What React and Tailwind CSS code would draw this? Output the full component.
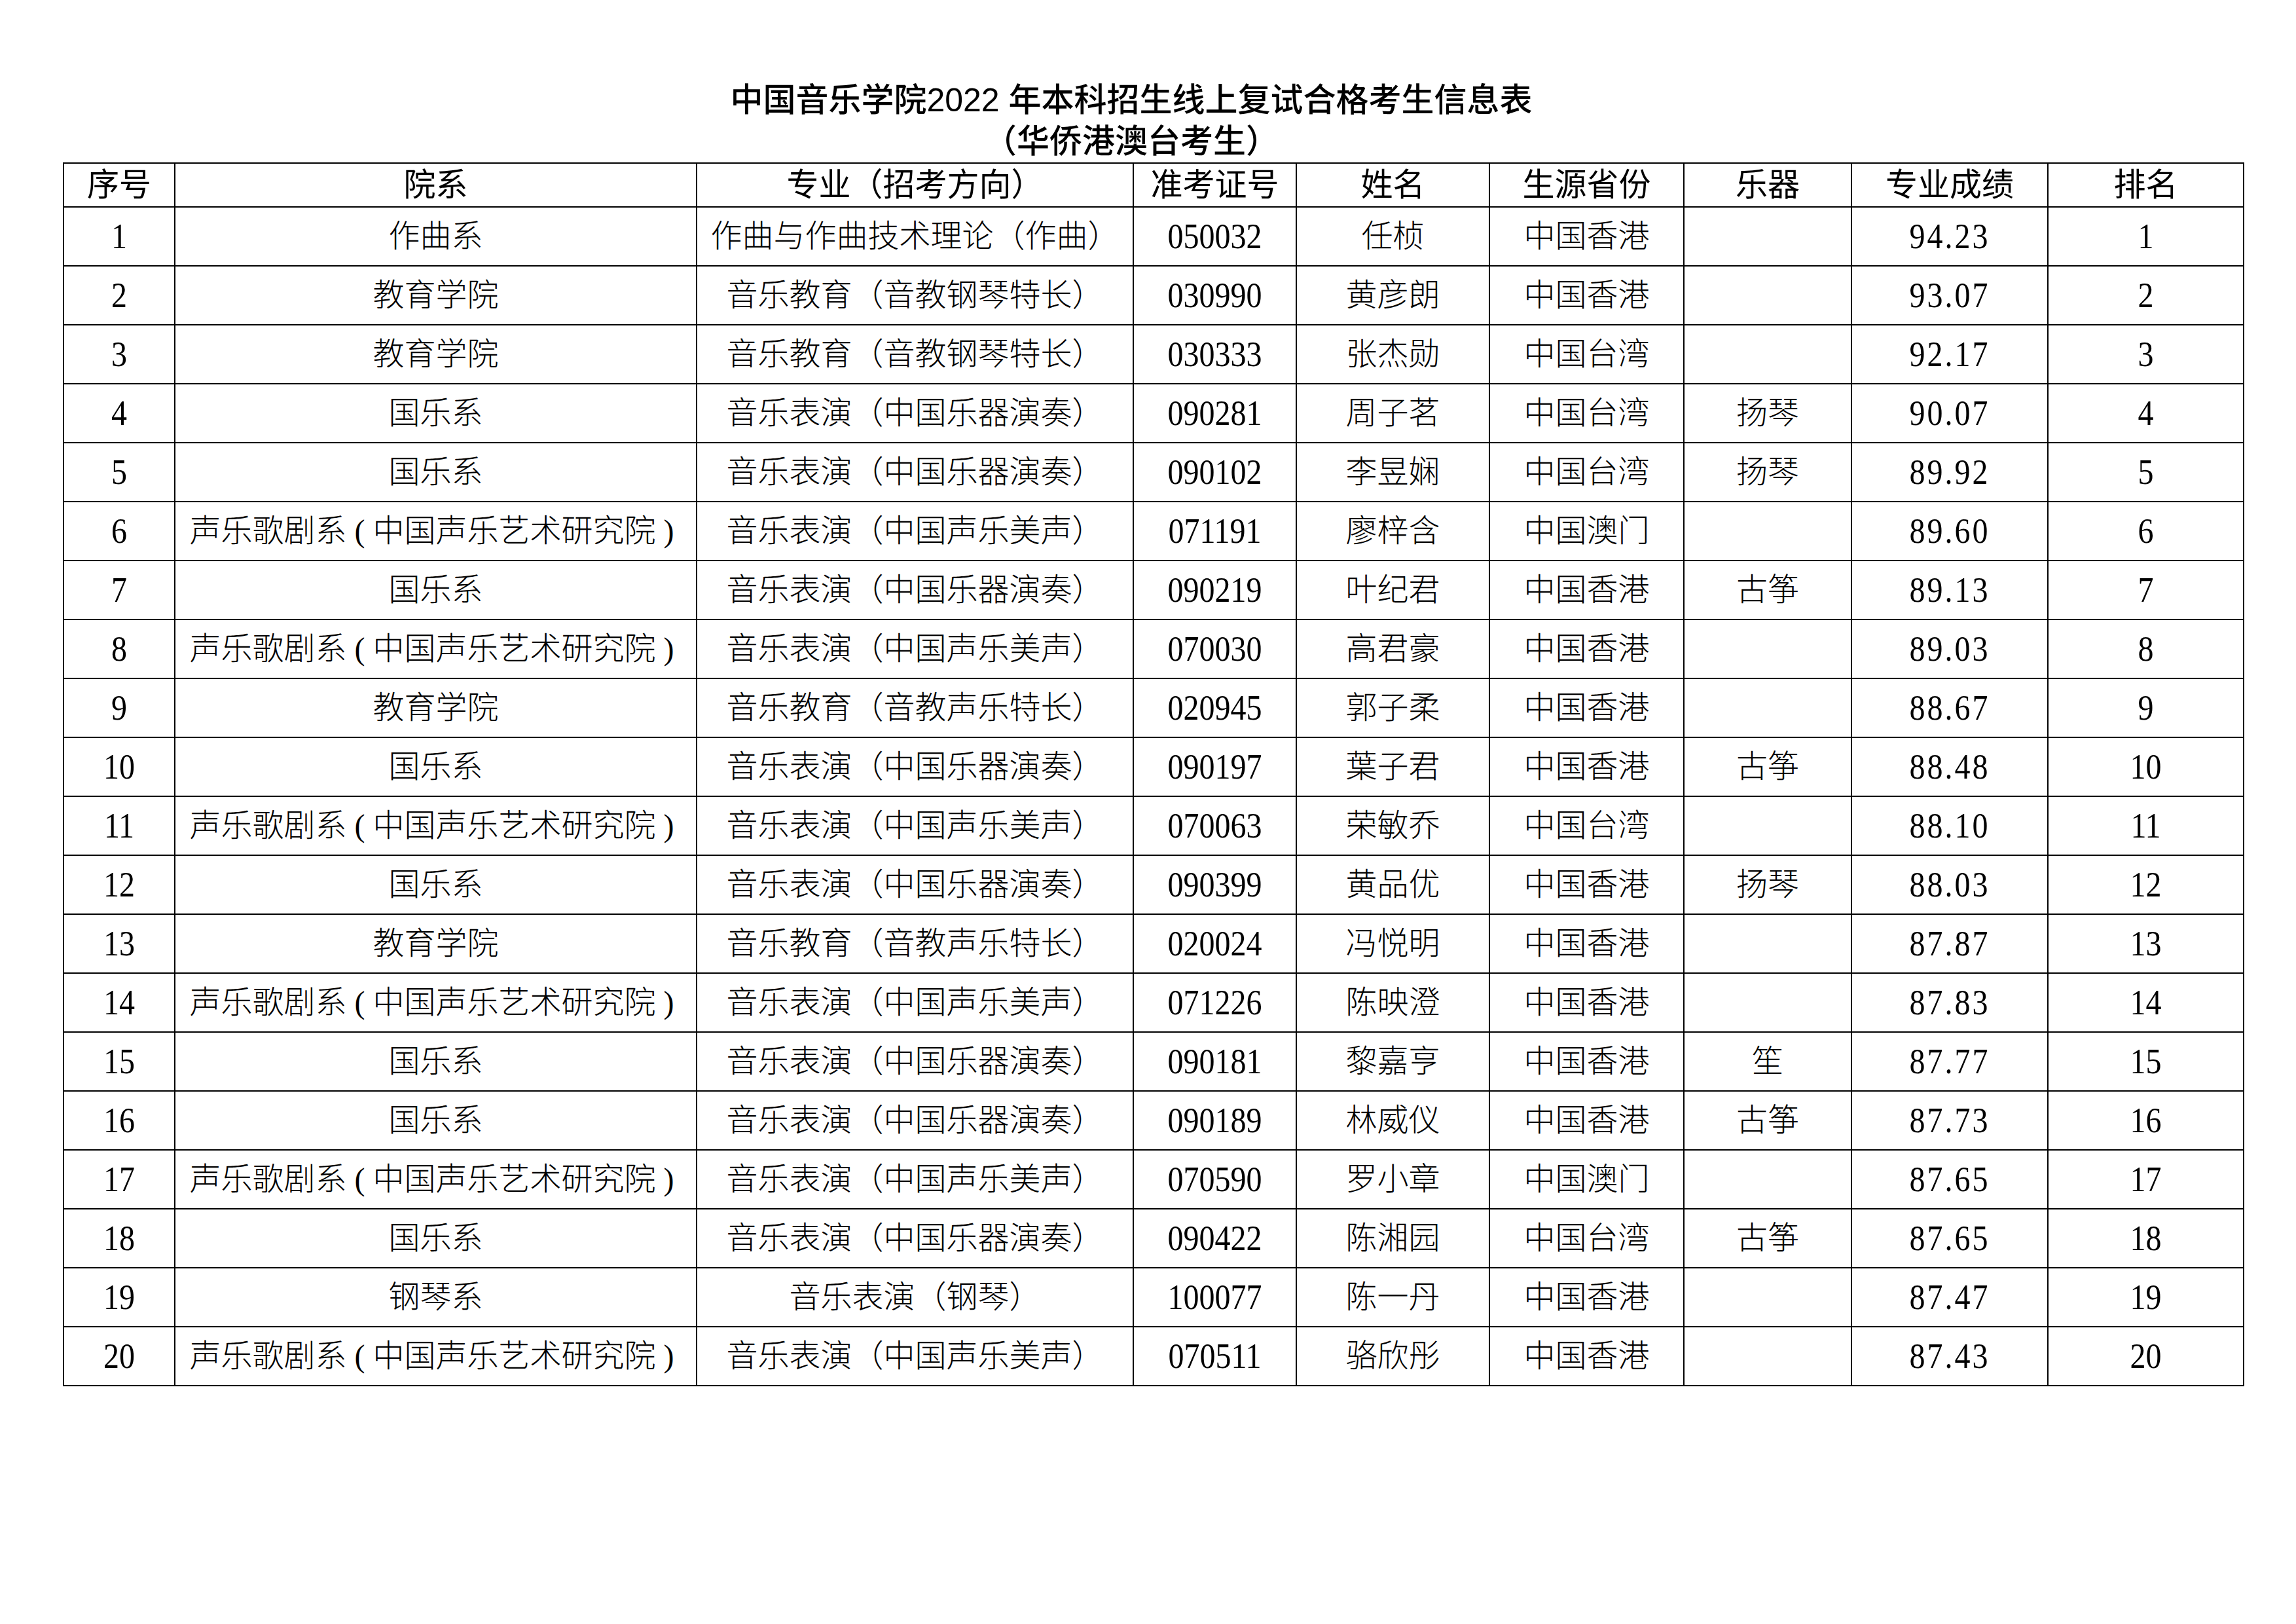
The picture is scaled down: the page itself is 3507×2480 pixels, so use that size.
const rows = [
  ["1", "作曲系", "作曲与作曲技术理论（作曲）", "050032", "任桢", "中国香港", "", "94.23", "1"],
  ["2", "教育学院", "音乐教育（音教钢琴特长）", "030990", "黄彦朗", "中国香港", "", "93.07", "2"],
  ["3", "教育学院", "音乐教育（音教钢琴特长）", "030333", "张杰勋", "中国台湾", "", "92.17", "3"],
  ["4", "国乐系", "音乐表演（中国乐器演奏）", "090281", "周子茗", "中国台湾", "扬琴", "90.07", "4"],
  ["5", "国乐系", "音乐表演（中国乐器演奏）", "090102", "李昱娴", "中国台湾", "扬琴", "89.92", "5"],
  ["6", "声乐歌剧系(中国声乐艺术研究院)", "音乐表演（中国声乐美声）", "071191", "廖梓含", "中国澳门", "", "89.60", "6"],
  ["7", "国乐系", "音乐表演（中国乐器演奏）", "090219", "叶纪君", "中国香港", "古筝", "89.13", "7"],
  ["8", "声乐歌剧系(中国声乐艺术研究院)", "音乐表演（中国声乐美声）", "070030", "高君豪", "中国香港", "", "89.03", "8"],
  ["9", "教育学院", "音乐教育（音教声乐特长）", "020945", "郭子柔", "中国香港", "", "88.67", "9"],
  ["10", "国乐系", "音乐表演（中国乐器演奏）", "090197", "葉子君", "中国香港", "古筝", "88.48", "10"],
  ["11", "声乐歌剧系(中国声乐艺术研究院)", "音乐表演（中国声乐美声）", "070063", "荣敏乔", "中国台湾", "", "88.10", "11"],
  ["12", "国乐系", "音乐表演（中国乐器演奏）", "090399", "黄品优", "中国香港", "扬琴", "88.03", "12"],
  ["13", "教育学院", "音乐教育（音教声乐特长）", "020024", "冯悦明", "中国香港", "", "87.87", "13"],
  ["14", "声乐歌剧系(中国声乐艺术研究院)", "音乐表演（中国声乐美声）", "071226", "陈映澄", "中国香港", "", "87.83", "14"],
  ["15", "国乐系", "音乐表演（中国乐器演奏）", "090181", "黎嘉亨", "中国香港", "笙", "87.77", "15"],
  ["16", "国乐系", "音乐表演（中国乐器演奏）", "090189", "林威仪", "中国香港", "古筝", "87.73", "16"],
  ["17", "声乐歌剧系(中国声乐艺术研究院)", "音乐表演（中国声乐美声）", "070590", "罗小章", "中国澳门", "", "87.65", "17"],
  ["18", "国乐系", "音乐表演（中国乐器演奏）", "090422", "陈湘园", "中国台湾", "古筝", "87.65", "18"],
  ["19", "钢琴系", "音乐表演（钢琴）", "100077", "陈一丹", "中国香港", "", "87.47", "19"],
  ["20", "声乐歌剧系(中国声乐艺术研究院)", "音乐表演（中国声乐美声）", "070511", "骆欣彤", "中国香港", "", "87.43", "20"],
];

const headers = ["序号", "院系", "专业（招考方向）", "准考证号", "姓名", "生源省份", "乐器", "专业成绩", "排名"];

function Cell({ value, index }) {
  if (index === 0 || index === 3 || index === 8) {
    return <span className="inline-block scale-y-[1.15]">{value}</span>;
  }
  if (index === 7) {
    return <span className="inline-block scale-y-[1.15] tracking-[3px]">{value}</span>;
  }
  if (value.startsWith("声乐歌剧系(")) {
    return (
      <span>
        声乐歌剧系<span className="px-[12px]">(</span>中国声乐艺术研究院<span className="px-[12px]">)</span>
      </span>
    );
  }
  return <span>{value}</span>;
}

export default function App() {
  return (
    <div className="w-[3507px] h-[2480px] bg-white text-black pt-[122px] pl-[96px] font-['Liberation_Serif','Noto_Sans_CJK_SC',serif]">
      <div className="w-[3330px] pr-[66px] text-center text-[50px] leading-[63px] font-medium font-['Liberation_Sans','Noto_Sans_CJK_SC',sans-serif]">
        <div>中国音乐学院2022 年本科招生线上复试合格考生信息表</div>
        <div>（华侨港澳台考生）</div>
      </div>
      <table className="border-collapse table-fixed w-[3330px] text-[48px] leading-none font-light">
        <colgroup>
          <col className="w-[170px]" />
          <col className="w-[797px]" />
          <col className="w-[667px]" />
          <col className="w-[249px]" />
          <col className="w-[295px]" />
          <col className="w-[297px]" />
          <col className="w-[256px]" />
          <col className="w-[300px]" />
          <col className="w-[299px]" />
        </colgroup>
        <thead>
          <tr className="h-[67px]">
            {headers.map((h) => (
              <th key={h} className="border-2 border-black p-0 text-center align-middle font-normal text-[49px]">
                {h}
              </th>
            ))}
          </tr>
        </thead>
        <tbody>
          {rows.map((r) => (
            <tr key={r[0]} className="h-[90px]">
              {r.map((c, i) => (
                <td key={i} className="border-2 border-black p-0 text-center align-middle whitespace-nowrap">
                  <Cell value={c} index={i} />
                </td>
              ))}
            </tr>
          ))}
        </tbody>
      </table>
    </div>
  );
}
